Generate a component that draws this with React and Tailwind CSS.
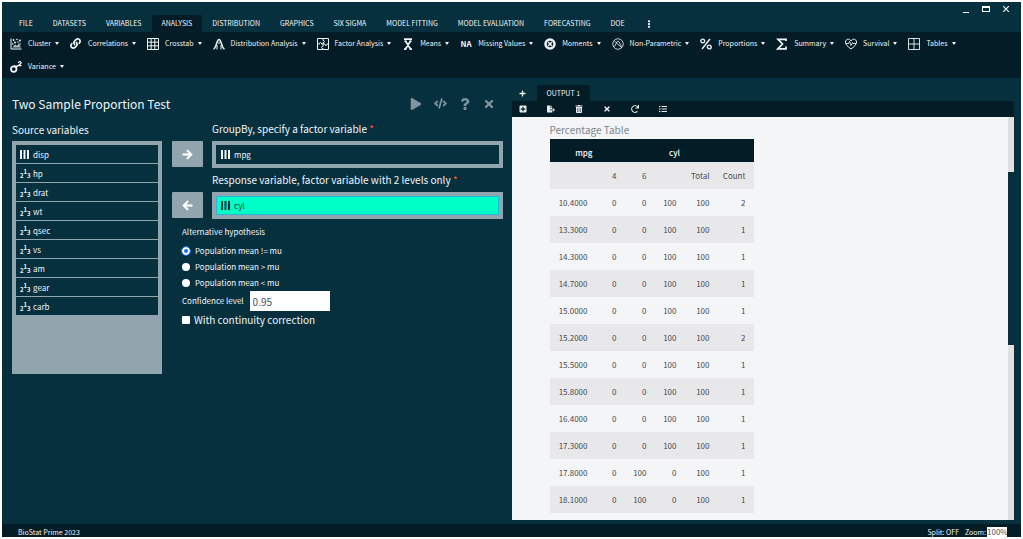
import React, { useState } from "react";
import {
  FaPlay, FaCode, FaQuestion, FaTimes, FaPlus, FaArrowRight, FaArrowLeft,
  FaPlusSquare, FaFileExport, FaTrashAlt, FaRedo, FaListUl, FaLink, FaEllipsisV,
} from "react-icons/fa";

const MENU = [
  "FILE", "DATASETS", "VARIABLES", "ANALYSIS", "DISTRIBUTION", "GRAPHICS", "SIX SIGMA",
  "MODEL FITTING", "MODEL EVALUATION", "FORECASTING", "DOE",
];

function Svg({ children }) {
  return (
    <svg viewBox="0 0 24 24" className="h-3 w-3" fill="none" stroke="currentColor" strokeWidth="2" aria-hidden="true">
      {children}
    </svg>
  );
}

const ClusterIcon = () => (
  <Svg>
    <path d="M2 1v21h21" />
    <path d="M5 19l5-6 4 3 3-5 5 8z" fill="currentColor" stroke="none" opacity="0.75" />
    <g fill="currentColor" stroke="none">
      <circle cx="7" cy="4" r="1.8" /><circle cx="14" cy="3" r="1.6" /><circle cx="20" cy="5" r="2" />
      <circle cx="10" cy="9" r="2" /><circle cx="16" cy="8" r="1.6" /><circle cx="5.500" cy="12" r="1.6" />
      <circle cx="20" cy="12" r="1.6" />
    </g>
  </Svg>
);
const GridIcon = () => (
  <Svg><path d="M1 1h22v22H1zM1 8.300h22M1 15.600h22M8.300 1v22M15.600 1v22" /></Svg>
);
const CurveIcon = () => (
  <Svg>
    <path d="M1 22c6-1 6-19 11-19s5 18 11 19" strokeWidth="3" />
    <path d="M8 23v-9M16 23v-9M12 7v5" />
  </Svg>
);
const PuzzleIcon = () => (
  <Svg>
    <path d="M1 1h22v22H1z" />
    <path d="M12 1v4c4-1 4 5 0 4v8c-4-1-4 5 0 4v2M1 12h4c-1-4 5-4 4 0h7c-1 4 5 4 4 0h3" />
  </Svg>
);
const MeanIcon = () => (
  <Svg><path d="M4 2h16M7 6l10 16M17 6L7 22M4 22h5M15 22h5M5 6h4M15 6h4" strokeWidth="3.500" /></Svg>
);
const MomentsIcon = () => (
  <Svg>
    <circle cx="12" cy="12" r="9" strokeWidth="5" />
    <path d="M8 8l8 8M16 8l-8 8" strokeWidth="3" />
  </Svg>
);
const NonParametricIcon = () => (
  <Svg>
    <circle cx="12" cy="12" r="10.500" strokeWidth="1.600" />
    <path d="M4 17c4 0 4-11 8-11s4 11 8 11M4 5l16 15" strokeWidth="1.600" />
  </Svg>
);
const PercentIcon = () => (
  <Svg>
    <circle cx="5.500" cy="6" r="3.800" strokeWidth="2.800" />
    <circle cx="18.500" cy="18" r="3.800" strokeWidth="2.800" />
    <path d="M20 2L4 22" strokeWidth="2.800" />
  </Svg>
);
const SumIcon = () => (
  <Svg><path d="M20 6V2.500H4L13 12 4 21.500h16V17" strokeWidth="3.500" /></Svg>
);
const HeartIcon = () => (
  <Svg>
    <path d="M12 22C5 17 1 13 1 8c0-6 8-8 11-2 3-6 11-4 11 2 0 5-4 9-11 14z" />
    <path d="M2 11h5l2-4 3 8 3-6 1 2h6" strokeWidth="1.700" />
  </Svg>
);
const TableIcon = () => (
  <Svg><path d="M1 1h22v22H1zM1 12h22M12 1v22" strokeWidth="1.800" /></Svg>
);
const VarianceIcon = () => (
  <Svg>
    <circle cx="7.500" cy="16" r="5.500" strokeWidth="3.500" />
    <path d="M7 10.500h9" strokeWidth="3" />
    <path d="M17 4c0-4 6-3 5 0-.5 2-3 3-5 5h6" strokeWidth="2.500" />
  </Svg>
);
const NaMark = () => <span className="text-[8px] font-bold">NA</span>;

const TOOLS = [
  ["Cluster", ClusterIcon], ["Correlations", FaLink], ["Crosstab", GridIcon],
  ["Distribution Analysis", CurveIcon], ["Factor Analysis", PuzzleIcon], ["Means", MeanIcon],
  ["Missing Values", NaMark], ["Moments", MomentsIcon], ["Non-Parametric", NonParametricIcon],
  ["Proportions", PercentIcon], ["Summary", SumIcon], ["Survival", HeartIcon],
  ["Tables", TableIcon], ["Variance", VarianceIcon],
];

const SOURCES = ["disp", "hp", "drat", "wt", "qsec", "vs", "am", "gear", "carb"];

const ROWS = [
  ["10.4000", 0, 0, 100, 100, 2], ["13.3000", 0, 0, 100, 100, 1], ["14.3000", 0, 0, 100, 100, 1],
  ["14.7000", 0, 0, 100, 100, 1], ["15.0000", 0, 0, 100, 100, 1], ["15.2000", 0, 0, 100, 100, 2],
  ["15.5000", 0, 0, 100, 100, 1], ["15.8000", 0, 0, 100, 100, 1], ["16.4000", 0, 0, 100, 100, 1],
  ["17.3000", 0, 0, 100, 100, 1], ["17.8000", 0, 100, 0, 100, 1], ["18.1000", 0, 100, 0, 100, 1],
];

const OUTPUT_TOOLS = [
  ["Add", FaPlusSquare], ["Export", FaFileExport], ["Delete", FaTrashAlt],
  ["Close", FaTimes], ["Refresh", FaRedo], ["List", FaListUl],
];

function FactorIcon() {
  return (
    <svg viewBox="0 0 9 9" className="h-[9px] w-[9px] shrink-0" fill="currentColor" aria-hidden="true">
      <path d="M0 0h2v9H0zM3.500 0h2v9h-2zM7 0h2v9H7z" />
    </svg>
  );
}

function ScaleIcon() {
  return (
    <span className="flex w-[9px] shrink-0 items-end text-[6px] leading-[6px] font-bold" aria-hidden="true">
      <span>2</span><span className="pb-1">1</span><span>3</span>
    </span>
  );
}

function Field({ label, selected, value, Arrow, action }) {
  return (
    <div className="flex items-end gap-[9px]">
      <button type="button" aria-label={action} className="mb-px flex h-[26px] w-[31px] items-center justify-center rounded-[1px] bg-[#92a5ae] text-white">
        <Arrow className="h-[11px] w-[11px]" stroke="currentColor" strokeWidth="24" />
      </button>
      <div className="min-w-0 flex-1">
        <div className="pt-[2px] pb-[2px] text-[10px] leading-5">
          {label} <span className="text-[#ff5a2e]">*</span>
        </div>
        <div className="bg-[#92a5ae] p-1">
          <div
            className={
              selected
                ? "flex h-[19px] items-center gap-1 border border-[#22b8d8] bg-[#00ffc6] px-1 text-[8px] text-[#07303f]"
                : "flex h-[19px] items-center gap-1 border border-[#07303f] bg-[#07303f] px-1 text-[8px]"
            }
          >
            <FactorIcon />
            <span>{value}</span>
          </div>
        </div>
      </div>
    </div>
  );
}

function AnalysisPanel() {
  const [hypothesis, setHypothesis] = useState("!=");
  return (
    <section className="w-1/2 min-w-0 pr-[9px] pl-[10px]">
      <div className="flex h-[33px] items-center pt-[18px] pr-2">
        <h1 className="flex-1 text-[12px] leading-5">Two Sample Proportion Test</h1>
        <div className="flex items-center gap-3 text-[#7f939d]">
          <button type="button" aria-label="Run"><FaPlay className="h-3 w-3" /></button>
          <button type="button" aria-label="Code"><FaCode className="h-[13px] w-[13px]" /></button>
          <button type="button" aria-label="Help"><FaQuestion className="h-3 w-3" /></button>
          <button type="button" aria-label="Close"><FaTimes className="h-3 w-3" /></button>
        </div>
      </div>
      <div className="mt-[6px] flex gap-[10px]">
        <div className="w-[150px] shrink-0">
          <h2 className="pt-[3px] pb-px text-[10px] leading-5">Source variables</h2>
          <ul className="flex h-[233px] flex-col gap-px bg-[#92a5ae] p-1 text-[8px]">
            {SOURCES.map((name, i) => (
              <li key={name} className="flex h-[18px] items-center gap-1 bg-[#07303f] px-1 pt-px">
                {i === 0 ? <FactorIcon /> : <ScaleIcon />}
                <span>{name}</span>
              </li>
            ))}
          </ul>
        </div>
        <div className="min-w-0 flex-1">
          <Field label="GroupBy, specify a factor variable" value="mpg" Arrow={FaArrowRight} action="Add variable" />
          <Field label="Response variable, factor variable with 2 levels only" value="cyl" Arrow={FaArrowLeft} action="Remove variable" selected />
          <div className="pt-[5px] pl-[10px]">
            <fieldset className="text-[8px] leading-4">
              <legend className="mb-[3px]">Alternative hypothesis</legend>
              {["!=", ">", "<"].map((op) => (
                <label key={op} className="flex h-4 items-center gap-[5px]">
                  <input
                    type="radio"
                    name="hypothesis"
                    checked={hypothesis === op}
                    onChange={() => setHypothesis(op)}
                    className="h-2 w-2 appearance-none rounded-full bg-white checked:border-2 checked:border-white checked:bg-[#0d6efd] checked:outline checked:outline-[#0d6efd]"
                  />
                  <span>Population mean {op} mu</span>
                </label>
              ))}
            </fieldset>
            <div className="flex items-center gap-[6px] text-[8px]">
              <label htmlFor="confidence">Confidence level</label>
              <input id="confidence" defaultValue="0.95" className="h-5 w-20 bg-white px-[3px] text-[10px] text-[#495057] outline-none" />
            </div>
            <label className="flex h-[18px] items-center gap-1 text-[10px] leading-4">
              <input type="checkbox" className="h-2 w-2 appearance-none rounded-[1px] bg-white checked:bg-[#0d6efd]" />
              With continuity correction
            </label>
          </div>
        </div>
      </div>
    </section>
  );
}

function OutputPanel() {
  return (
    <section className="flex min-h-0 w-1/2 min-w-0 flex-col pt-[7px] pr-[7px]">
      <div className="flex h-4 items-center">
        <button type="button" aria-label="New output" className="flex w-[25px] items-center justify-center pr-1">
          <FaPlus className="h-[7px] w-[7px]" />
        </button>
        <button type="button" className="h-4 rounded-t-[2px] bg-[#031c26] px-[10px] text-[7px] leading-4">OUTPUT 1</button>
      </div>
      <div className="flex h-4 shrink-0 items-center gap-5 rounded-tr-[2px] bg-[#031c26] pl-[7px]">
        {OUTPUT_TOOLS.map(([name, Icon]) => (
          <button key={name} type="button" aria-label={name} className="text-[#e6ecef]"><Icon className="h-2 w-2" /></button>
        ))}
      </div>
      <div className="flex min-h-0 flex-1 bg-[#f4f5f7] text-[#444c52]">
        <div className="min-w-0 flex-1 overflow-hidden pt-1 pl-[38px]">
          <table className="table-fixed border-collapse text-right text-[8px] leading-3">
            <caption className="h-[18px] text-left text-[10px] leading-[18px] text-[#7b858c]">Percentage Table</caption>
            <colgroup>
              <col className="w-[46px]" />
              <col className="w-[29px]" />
              <col className="w-[30px]" />
              <col className="w-[30px]" />
              <col className="w-[33px]" />
              <col className="w-9" />
            </colgroup>
            <thead>
              <tr className="h-[23px] bg-[#031c26] text-[8px] text-white">
                <th className="pt-1 pr-[3px] font-medium">mpg</th>
                <th colSpan={5} className="pt-1 text-center font-medium">cyl</th>
              </tr>
              <tr className="h-[27px] bg-[#e8e8ea]">
                {["", "4", "6", "", "Total", "Count"].map((h, i) => (
                  <th key={i} className="pr-2 font-normal">{h}</th>
                ))}
              </tr>
            </thead>
            <tbody>
              {ROWS.map((row) => (
                <tr key={row[0]} className="h-[27px] even:bg-[#e8e8ea]">
                  {row.map((cell, i) => (
                    <td key={i} className="pr-2">{cell}</td>
                  ))}
                </tr>
              ))}
            </tbody>
          </table>
        </div>
        <div className="w-[6px] bg-[#e1e1e1] pt-[55px]">
          <div className="h-[173px] bg-[#07303f]" />
        </div>
      </div>
    </section>
  );
}

export default function App() {
  return (
    <div className="h-screen bg-white p-[2px] font-['Noto_Sans_CJK_SC','Noto_Sans',sans-serif] text-[#f1f5f7]">
      <div className="flex h-full flex-col overflow-hidden bg-[#07303f]">
        <header>
          <div className="flex h-[13px] items-center justify-end gap-[13px] pr-3">
            <button type="button" aria-label="Minimize" className="flex h-2 items-end"><span className="h-px w-[6px] bg-white" /></button>
            <button type="button" aria-label="Maximize" className="h-[6px] w-2 border border-t-2 border-white" />
            <button type="button" aria-label="Close window">
              <svg viewBox="0 0 6 6" className="h-[6px] w-[6px]" stroke="currentColor" strokeWidth="1.200"><path d="M0 0l6 6M6 0L0 6" /></svg>
            </button>
          </div>
          <nav className="flex pl-[7px] text-[7px] leading-[17px]">
            {MENU.map((name) => (
              <button
                key={name}
                type="button"
                className={name === "ANALYSIS" ? "rounded-t-[2px] bg-[#031c26] px-[10px]" : "px-[10px]"}
              >
                {name}
              </button>
            ))}
            <button type="button" aria-label="More" className="px-[10px]"><FaEllipsisV className="h-2 w-2" /></button>
          </nav>
          <div className="flex flex-wrap gap-x-[11px] bg-[#031c26] pr-8 pl-2">
            {TOOLS.map(([name, Icon]) => (
              <button key={name} type="button" className="flex h-[23px] items-center text-[7px]">
                <span className="mr-[6px] flex h-3 min-w-3 items-center justify-center"><Icon className="h-[11px] w-[11px]" /></span>
                {name}
                <span className="ml-1 border-x-[2px] border-t-[3px] border-x-transparent border-t-current" />
              </button>
            ))}
          </div>
        </header>
        <main className="flex min-h-0 flex-1 pb-[4px]">
          <AnalysisPanel />
          <OutputPanel />
        </main>
        <footer className="flex h-[13px] items-end bg-[#031c26] pr-[14px] pl-4 text-[7px] leading-[10px]">
          <span className="flex-1">BioStat Prime 2023</span>
          <span className="mr-[6px]">Split: OFF</span>
          <label htmlFor="zoom" className="mr-px">Zoom:</label>
          <input id="zoom" defaultValue="100%" className="h-[10px] w-5 bg-white text-[8px] leading-[10px] text-[#495057] outline-none" />
        </footer>
      </div>
    </div>
  );
}
